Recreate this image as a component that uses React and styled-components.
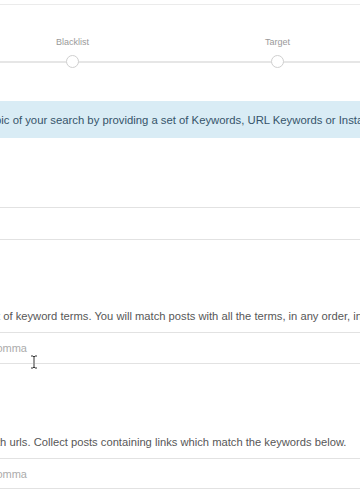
import React from 'react';
import styled, {createGlobalStyle} from 'styled-components';

const GlobalStyle = createGlobalStyle`
  html, body {
    margin: 0;
    padding: 0;
    background: #fff;
    overflow: hidden;
  }
  body {
    font-family: "Liberation Sans", Arial, Helvetica, sans-serif;
    -webkit-font-smoothing: antialiased;
  }
`;

const Page = styled.div`
  position: relative;
  width: 360px;
  height: 500px;
  overflow: hidden;
  padding-top: 4px;
  box-sizing: border-box;
`;

const TopRule = styled.div`
  height: 0;
  border-top: 1px solid #ebebeb;
  margin: 0 -20px;
`;

const Stepper = styled.div`
  position: relative;
  display: flex;
  width: 820px;
  margin-left: -235px;
  margin-top: 31px;

  &::before {
    content: '';
    position: absolute;
    left: 0;
    right: 0;
    top: 25px;
    height: 2px;
    background: #e6e6e6;
  }
`;

const Step = styled.div`
  position: relative;
  width: 205px;
  display: flex;
  flex-direction: column;
  align-items: center;
`;

const StepLabel = styled.span`
  font-size: 9px;
  line-height: 12px;
  height: 12px;
  color: #9a9a9a;
  white-space: nowrap;
`;

const StepDot = styled.span`
  display: block;
  width: 13px;
  height: 13px;
  margin-top: 7px;
  box-sizing: border-box;
  border: 1.5px solid #cfcfcf;
  border-radius: 50%;
  background: #fff;
  position: relative;
  z-index: 1;
`;

const Banner = styled.div`
  margin-top: 33px;
  height: 37px;
  background: #d9ecf5;
  display: flex;
  align-items: center;
  overflow: hidden;
`;

const Line = styled.span`
  display: block;
  white-space: nowrap;
  margin-left: ${p => p.$shift}px;
  font-size: ${p => p.$size || 11.2}px;
  line-height: 16px;
  color: ${p => p.$color || '#575757'};
`;

const Section = styled.div`
  margin-top: ${p => p.$gap}px;
  overflow: hidden;
`;

const Input = styled.input`
  display: block;
  box-sizing: border-box;
  height: ${p => p.$h || 32}px;
  margin-left: ${p => p.$shift || -140}px;
  margin-top: ${p => p.$gap || 0}px;
  width: calc(100% + 200px);
  padding: 0 10px;
  border: 1px solid #e2e2e2;
  background: #fff;
  font-family: inherit;
  font-size: 11px;
  color: #555;
  outline: none;

  &::placeholder {
    color: #ababab;
  }
`;

const Cursor = styled.svg`
  position: absolute;
  left: 30px;
  top: 355px;
  pointer-events: none;
`;

// only the middle two steps are inside the visible crop
const steps = ['', 'Blacklist', 'Target', ''];

export default function App() {
  return (
    <>
      <GlobalStyle />
      <Page>
        <TopRule />
        <Stepper>
          {steps.map((s, i) => (
            <Step key={i}>
              <StepLabel>{s}</StepLabel>
              <StepDot />
            </Step>
          ))}
        </Stepper>

        <Banner>
          <Line $shift={-69} $size={11.3} $color="#36546a">
            Define the topic of your search by providing a set of Keywords, URL Keywords or Instagram hashtags.
          </Line>
        </Banner>

        <Section $gap={69}>
          <Input $h={33} />
        </Section>

        <Section $gap={68}>
          <Line $shift={-54}>
            Enter a set of keyword terms. You will match posts with all the terms, in any order, in the post text.
          </Line>
          <Input $gap={8} $shift={-132} placeholder="Separate keywords by comma" />
        </Section>

        <Section $gap={70}>
          <Line $shift={-77}>
            Match posts with urls. Collect posts containing links which match the keywords below.
          </Line>
          <Input $gap={8} $h={31} $shift={-132} placeholder="Separate keywords by comma" />
        </Section>

        <Cursor width="8" height="14" viewBox="0 0 8 14">
          <path d="M1 1h2l1 1 1-1h2M4 2v10M1 13h2l1-1 1 1h2" fill="none" stroke="#fff" strokeWidth="2.2" />
          <path d="M1 1h2l1 1 1-1h2M4 2v10M1 13h2l1-1 1 1h2" fill="none" stroke="#333" strokeWidth="1" />
        </Cursor>
      </Page>
    </>
  );
}
